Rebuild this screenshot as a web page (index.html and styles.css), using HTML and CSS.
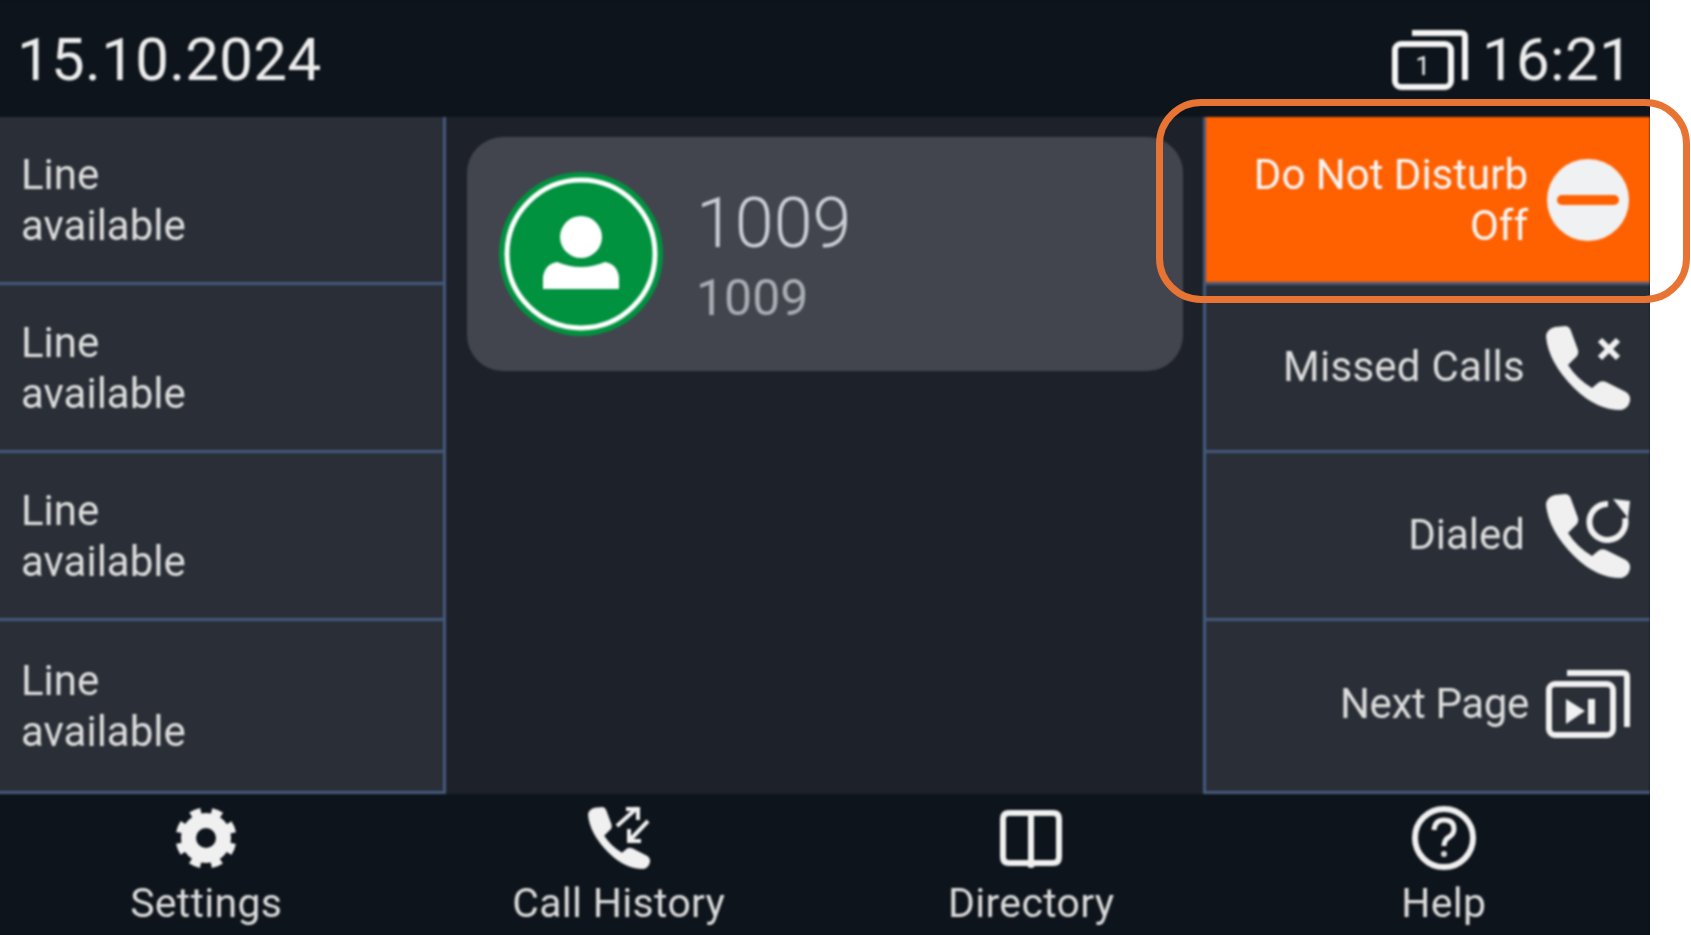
FILE: index.html
```html
<!DOCTYPE html>
<html lang="en">
<head>
    <meta charset="UTF-8">
    <title>Phone home screen</title>
    <link rel="stylesheet" href="styles.css">
</head>
<body>
    <svg class="defs" width="0" height="0">
        <symbol id="phone" viewBox="0 0 84 84">
            <path d="M0 10Q1 3 9 1L20 0Q24 1 25 5L32 24Q33 29 29 32L22 39Q31 53 46 62L52 57Q55 54 60 56L80 66Q85 69 84 75Q82 83 75 84Q50 84 28 62Q2 36 0 10Z"/>
        </symbol>
    </svg>

    <div class="frame">
        <div class="screen">
            <header class="topbar">
                <span class="clock-date">15.10.2024</span>
                <div class="topbar-right">
                    <svg class="page-icon" viewBox="0 0 76 60">
                        <rect x="3" y="14" width="56" height="43" rx="6"/>
                        <path d="M20 3H69Q73 3 73 7V50"/>
                        <text x="31" y="45" text-anchor="middle">1</text>
                    </svg>
                    <span class="clock-time">16:21</span>
                </div>
            </header>

            <main class="main">
                <!-- line keys -->
                <div class="keys keys-left">
                    <div class="key"><span>Line<br>available</span></div>
                    <div class="key"><span>Line<br>available</span></div>
                    <div class="key"><span>Line<br>available</span></div>
                    <div class="key"><span>Line<br>available</span></div>
                </div>

                <div class="center">
                    <div class="account-card">
                        <svg class="avatar" viewBox="0 0 164 164">
                            <circle cx="82" cy="82" r="82" fill="#00923f"/>
                            <circle cx="82" cy="82" r="74" fill="none" stroke="#fff" stroke-width="5"/>
                            <circle cx="82" cy="65" r="21" fill="#fff"/>
                            <path d="M44 117V105Q46 92 58 90Q82 100 106 90Q118 92 120 105V117Z" fill="#fff"/>
                        </svg>
                        <div class="account-text">
                            <div class="account-name">1009</div>
                            <div class="account-number">1009</div>
                        </div>
                    </div>
                </div>

                <!-- function keys -->
                <div class="keys keys-right">
                    <div class="key key-active">
                        <span>Do Not Disturb<br>Off</span>
                        <svg class="key-icon" viewBox="0 0 84 84">
                            <circle cx="42" cy="42" r="41" fill="#f0f1f2"/>
                            <rect x="11" y="37" width="62" height="10" rx="5" fill="#ff6000"/>
                        </svg>
                    </div>
                    <div class="key key-missed">
                        <span>Missed Calls</span>
                        <svg class="key-icon call-icon" viewBox="0 0 84 84">
                            <use href="#phone" width="84" height="84" fill="#f0f0f0"/>
                            <path d="M54 14L72 32M72 14L54 32" class="icon-line"/>
                        </svg>
                    </div>
                    <div class="key">
                        <span>Dialed</span>
                        <svg class="key-icon call-icon" viewBox="0 0 84 84">
                            <use href="#phone" width="84" height="84" fill="#f0f0f0"/>
                            <path d="M62 10A18 18 0 1 0 79 24" class="icon-line"/>
                            <path d="M67 5L84 7L82 24Z" fill="#f0f0f0"/>
                        </svg>
                    </div>
                    <div class="key key-next">
                        <span>Next Page</span>
                        <svg class="key-icon next-icon" viewBox="0 0 84 68">
                            <rect x="3" y="14" width="64" height="51" rx="6" class="icon-line"/>
                            <path d="M21 3H77Q81 3 81 7V57" class="icon-line"/>
                            <path d="M20 29L39 41L20 54Z" fill="#f0f0f0"/>
                            <rect x="42" y="29" width="7" height="25" fill="#f0f0f0"/>
                        </svg>
                    </div>
                </div>
            </main>

            <nav class="softkeys">
                <div class="softkey">
                    <svg class="softkey-icon" viewBox="0 0 64 64">
                        <circle cx="32" cy="32" r="17.5" fill="none" stroke="#f0f0f0" stroke-width="15"/>
                        <circle cx="32" cy="32" r="27.5" fill="none" stroke="#f0f0f0" stroke-width="6" stroke-dasharray="10.8 10.8" stroke-dashoffset="-5.4"/>
                    </svg>
                    <span>Settings</span>
                </div>
                <div class="softkey">
                    <svg class="softkey-icon" viewBox="0 0 64 64">
                        <use href="#phone" x="1" y="1" width="62" height="62" fill="#f0f0f0"/>
                        <path d="M30 20L50 2M39 3H51V14M61 15L42 35M42 23V35H54" class="icon-line icon-hair"/>
                    </svg>
                    <span>Call History</span>
                </div>
                <div class="softkey">
                    <svg class="softkey-icon" viewBox="0 0 64 64">
                        <path d="M10 7H54Q60 7 60 13V51Q60 57 54 57H10Q4 57 4 51V13Q4 7 10 7ZM32 7V57" class="icon-line"/>
                        <circle cx="32" cy="58" r="4" fill="#f0f0f0"/>
                    </svg>
                    <span>Directory</span>
                </div>
                <div class="softkey">
                    <svg class="softkey-icon" viewBox="0 0 64 64">
                        <circle cx="32" cy="32" r="29" class="icon-line"/>
                        <path d="M22 24Q23 14 32 14Q42 14 42 23Q42 28 37 31Q32 34 32 40" class="icon-line icon-thin"/>
                        <circle cx="32" cy="48" r="3" fill="#d8d8d8"/>
                    </svg>
                    <span>Help</span>
                </div>
            </nav>
        </div>
    </div>

    <div class="callout"></div>
</body>
</html>
```

FILE: styles.css
```css
html, body {
    margin: 0;
    height: 100%;
    background: #fff;
    overflow: hidden;
}

body {
    font-family: 'Roboto', sans-serif;
    color: #dcdcdc;
}

.defs {
    display: block;
    height: 0;
}

/* clips the soft edge of the blur below */
.frame {
    width: 1650px;
    height: 935px;
    background: #0e141b;
    overflow: hidden;
}

/* the source is an upscaled photo of the display, so everything is a bit soft.
   runs 4px past the left side so the fade stays out of view */
.screen {
    width: 1654px;
    height: 100%;
    margin-left: -4px;
    display: flex;
    flex-direction: column;
    background: #0e141b;
    filter: blur(0.8px);
}

/* top bar */
.topbar {
    height: 117px;
    flex: none;
    display: flex;
    justify-content: space-between;
    align-items: center;
    padding: 2px 17px 0 21px;
    box-sizing: border-box;
    font-size: 60px;
    letter-spacing: 0.3px;
    color: #ececec;
}

.topbar-right {
    display: flex;
    align-items: center;
    gap: 14px;
}

.page-icon {
    width: 76px;
    height: 60px;
    fill: none;
    stroke: #f4f4f4;
    stroke-width: 6;
}

.page-icon text {
    font-size: 26px;
    fill: #f4f4f4;
    stroke: none;
}

/* middle part */
.main {
    height: 677px;
    flex: none;
    display: grid;
    grid-template-columns: 450px 1fr 447px;
    background: #1d222a;
}

.keys {
    display: grid;
    grid-template-rows: 168px 168px 168px 1fr;
    font-size: 42px;
    line-height: 51px;
}

.keys-left {
    border-right: 3px solid #44597c;
}

.keys-right {
    border-left: 3px solid #44597c;
}

.key {
    display: flex;
    align-items: center;
    background: #2a2f37;
    border-bottom: 3px solid #44597c;
}

.keys-left .key {
    padding-left: 25px;
}

.keys-right .key {
    justify-content: flex-end;
    text-align: right;
    gap: 21px;
    padding-right: 20px;
    padding-bottom: 3px;
}

.keys-right .key-active {
    background: #ff6000;
    color: #f6f6f6;
    gap: 18px;
    padding-bottom: 0;
}

.keys-right .key-next {
    gap: 17px;
    padding-bottom: 5px;
    letter-spacing: -0.35px;
}

.key-missed {
    letter-spacing: 0.25px;
}

.key-icon {
    width: 84px;
    height: 84px;
    flex: none;
}

.call-icon {
    margin-top: 4px;
}

.next-icon {
    height: 68px;
}

.icon-line {
    fill: none;
    stroke: #f0f0f0;
    stroke-width: 6;
}

.icon-thin {
    stroke-width: 5;
}

.icon-hair {
    stroke-width: 4;
}

.center {
    padding: 20px 20px 20px 21px;
}

.account-card {
    height: 234px;
    display: flex;
    align-items: center;
    gap: 33px;
    padding-left: 32px;
    background: #42454d;
    border-radius: 36px;
    box-sizing: border-box;
}

.avatar {
    width: 164px;
    height: 164px;
    flex: none;
}

.account-text {
    padding-top: 3px;
}

.account-name {
    font-size: 70px;
    font-weight: 300;
    line-height: 80px;
    color: #c9cdd4;
}

.account-number {
    margin-top: 5px;
    font-size: 50px;
    line-height: 60px;
    color: #a8acb3;
}

/* bottom soft keys */
.softkeys {
    flex: 1;
    display: grid;
    grid-template-columns: repeat(4, 1fr);
    padding-left: 4px;
    font-size: 41px;
    line-height: 51px;
    letter-spacing: 0.3px;
}

.softkey {
    display: flex;
    flex-direction: column;
    align-items: center;
    padding-top: 12px;
}

.softkey-icon {
    width: 64px;
    height: 64px;
    margin-bottom: 8px;
}

/* annotation drawn on top of the screenshot */
.callout {
    position: absolute;
    left: 1156px;
    top: 99px;
    width: 520px;
    height: 190px;
    border: 7px solid #e87434;
    border-radius: 45px;
}
```
